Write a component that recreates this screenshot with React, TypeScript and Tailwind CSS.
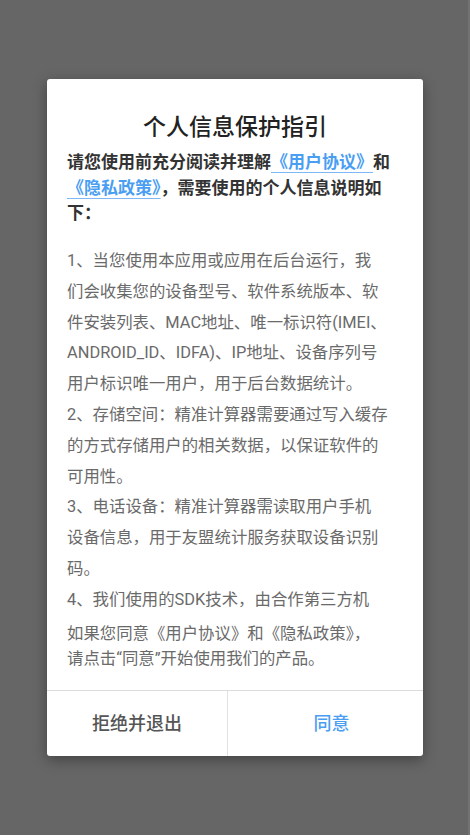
import React from "react";

const font = "font-['Roboto','Noto_Sans_CJK_SC',sans-serif]";

const bodyLines = [
  "1、当您使用本应用或应用在后台运行，我",
  "们会收集您的设备型号、软件系统版本、软",
  "件安装列表、MAC地址、唯一标识符(IMEI、",
  "ANDROID_ID、IDFA)、IP地址、设备序列号",
  "用户标识唯一用户，用于后台数据统计。",
  "2、存储空间：精准计算器需要通过写入缓存",
  "的方式存储用户的相关数据，以保证软件的",
  "可用性。",
  "3、电话设备：精准计算器需读取用户手机",
  "设备信息，用于友盟统计服务获取设备识别",
  "码。",
  "4、我们使用的SDK技术，由合作第三方机",
];

function Link({ children }: { children: React.ReactNode }) {
  return (
    <span className="text-[#4a9ef2] underline decoration-[#7db7f5] decoration-[1px] underline-offset-[4px]">
      {children}
    </span>
  );
}

export default function App() {
  return (
    <div className={`relative flex h-[835px] w-[470px] items-center justify-center bg-[#666666] ${font}`}>
      {/* sliver of the page underneath */}
      <div className="absolute right-0 top-0 h-full w-[2px] bg-[#727272]" />

      <div className="flex h-[677px] w-[376px] flex-col rounded-[3px] bg-white shadow-[0_4px_14px_rgba(0,0,0,0.35)]">
        <h1 className="pt-[34px] text-center text-[23px] font-medium leading-[30px] text-[#222222]">
          个人信息保护指引
        </h1>

        <div className="mt-[7px] px-[20px] text-[17px] font-bold leading-[25.5px] text-[#333333]">
          <div className="whitespace-nowrap">
            请您使用前充分阅读并理解<Link>《用户协议》</Link>和
          </div>
          <div className="whitespace-nowrap">
            <Link>《隐私政策》</Link>，需要使用的个人信息说明如
          </div>
          <div className="whitespace-nowrap">下：</div>
        </div>

        <div className="mt-[19.5px] h-[370px] overflow-hidden px-[20px] text-[16.4px] leading-[30.8px] text-[#6a6a6a]">
          {bodyLines.map((line) => (
            <div key={line} className="whitespace-nowrap">
              {line}
            </div>
          ))}
        </div>

        <div className="mt-[4.5px] px-[20px] text-[16.4px] leading-[25px] text-[#6a6a6a]">
          <div className="whitespace-nowrap">如果您同意《用户协议》和《隐私政策》，</div>
          <div className="whitespace-nowrap">请点击“同意”开始使用我们的产品。</div>
        </div>

        <div className="flex-1" />

        <div className="flex h-[66px] border-t border-[#dcdcdc]">
          <button
            type="button"
            className="flex w-[181px] items-center justify-center border-r border-[#e2e2e2] text-[18px] font-medium text-[#555555]"
          >
            拒绝并退出
          </button>
          <button
            type="button"
            className="flex flex-1 items-center justify-center pl-[12px] text-[18px] font-medium text-[#4a9ef2]"
          >
            同意
          </button>
        </div>
      </div>
    </div>
  );
}
